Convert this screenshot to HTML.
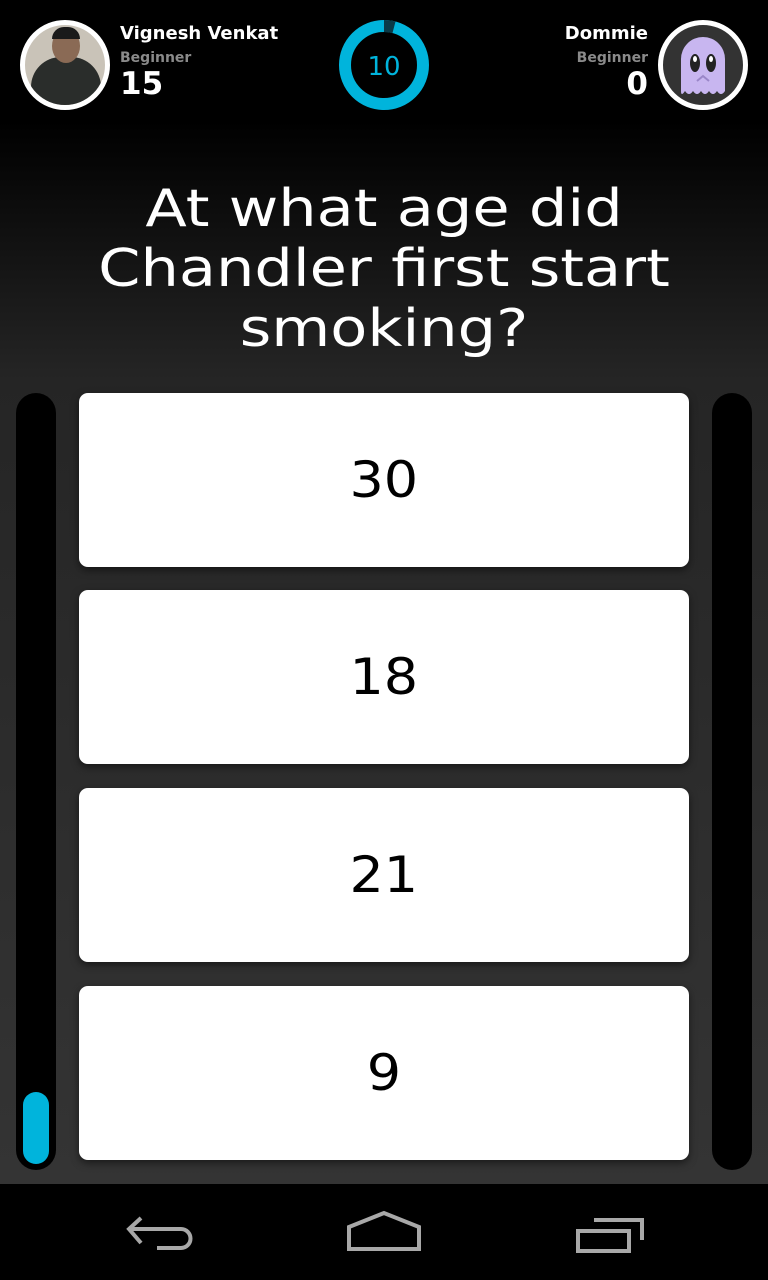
<!DOCTYPE html>
<html><head><style>
body{margin:0;width:768px;height:1280px;overflow:hidden;font-family:"DejaVu Sans","Liberation Sans",sans-serif;background:linear-gradient(#000 0px,#000 120px,#252525 380px,#343434 1184px);position:relative}
.a{position:absolute}
.card{position:absolute;left:79px;width:610px;height:174px;background:#fff;border-radius:9px;box-shadow:0 3px 8px rgba(0,0,0,.5);text-align:center;font-size:50px;line-height:174px;color:#000}
.card span{display:inline-block;transform:scaleX(1.08)}
.bar{position:absolute;top:393px;width:40px;height:777px;background:#000;border-radius:20px}
</style></head><body>
<div class="a" style="left:20px;top:20px;width:80px;height:80px;border:5px solid #fff;border-radius:50%;background:#c9c3b8;overflow:hidden">
<div class="a" style="left:6px;top:32px;width:70px;height:60px;border-radius:30px 30px 0 0;background:#2a2d2b"></div>
<div class="a" style="left:27px;top:4px;width:28px;height:34px;border-radius:50%;background:#8a6a55"></div>
<div class="a" style="left:27px;top:2px;width:28px;height:12px;border-radius:14px 14px 0 0;background:#1a1a1a"></div>
</div>
<div class="a" style="left:120px;top:23px;color:#fff;font-weight:bold;font-size:18px">Vignesh Venkat</div>
<div class="a" style="left:120px;top:50px;color:#8a8a8a;font-weight:bold;font-size:14px">Beginner</div>
<div class="a" style="left:120px;top:66px;color:#fff;font-weight:bold;font-size:31px">15</div>
<svg class="a" style="left:339px;top:20px" width="90" height="90" viewBox="0 0 90 90">
<circle cx="45" cy="45" r="39" fill="none" stroke="#00b4dc" stroke-width="12"/>
<path d="M45 6 A39 39 0 0 1 55 7.3" fill="none" stroke="#0a3a48" stroke-width="12"/>
<text x="45" y="55" text-anchor="middle" fill="#00b4dc" font-size="26" font-family="DejaVu Sans">10</text>
</svg>
<div class="a" style="right:120px;top:23px;color:#fff;font-weight:bold;font-size:18px">Dommie</div>
<div class="a" style="right:120px;top:50px;color:#8a8a8a;font-weight:bold;font-size:14px">Beginner</div>
<div class="a" style="right:120px;top:66px;color:#fff;font-weight:bold;font-size:31px">0</div>
<div class="a" style="left:658px;top:20px;width:80px;height:80px;border:5px solid #fff;border-radius:50%;background:#333;overflow:hidden">
<svg width="80" height="80" viewBox="0 0 80 80"><path d="M18 66 V34 a22 22 0 0 1 44 0 V66 q-4 6-8 0 q-4 6-8 0 q-4 6-8 0 q-4 6-8 0 q-4 6-8 0 q-4 6-4 0z" fill="#c8b6f0"/><ellipse cx="32" cy="38" rx="5" ry="9" fill="#222"/><ellipse cx="48" cy="38" rx="5" ry="9" fill="#222"/><ellipse cx="32" cy="34" rx="2" ry="3" fill="#fff"/><ellipse cx="48" cy="34" rx="2" ry="3" fill="#fff"/><path d="M34 56 l6-5 6 5" fill="none" stroke="#9a86c8" stroke-width="2"/></svg></div>
<div class="a" style="left:0;width:768px;top:179px;text-align:center;color:#fff;font-size:52px;line-height:60px;transform:scaleX(1.165)">At what age did<br>Chandler first start<br>smoking?</div>
<div class="bar" style="left:16px"></div>
<div class="a" style="left:23px;top:1092px;width:26px;height:72px;border-radius:13px;background:#00b4dc"></div>
<div class="bar" style="left:712px"></div>
<div class="card" style="top:393px"><span>30</span></div>
<div class="card" style="top:590px"><span>18</span></div>
<div class="card" style="top:788px"><span>21</span></div>
<div class="card" style="top:986px"><span>9</span></div>
<div class="a" style="left:0;top:1184px;width:768px;height:96px;background:#000"></div>
<svg class="a" style="left:0;top:1184px" width="768" height="96">
<g fill="none" stroke="#a8a8a8" stroke-width="4">
<path d="M141 34 L129 45 L141 59"/><path d="M129 45 H181 a9.5 9.5 0 0 1 0 19 H157"/>
<path d="M349 65 V43 L384 29 L419 43 V65 Z"/>
<path d="M578 67 V47 H629 V67 Z"/><path d="M594 36 H642 V56"/>
</g></svg>
</body></html>
